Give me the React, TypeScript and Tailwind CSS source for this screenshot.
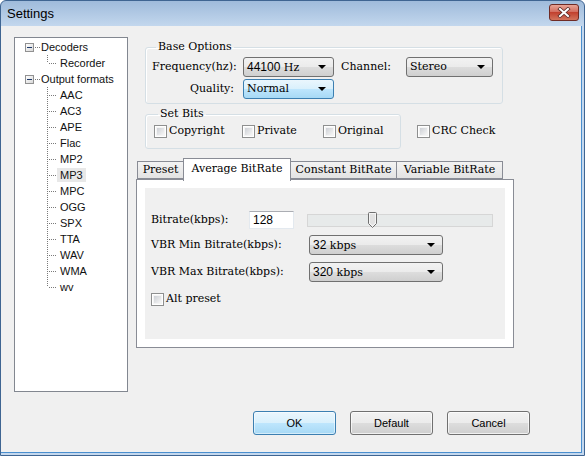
import type { ReactNode } from "react";

// the dialog's labels use a small serif face
const serif = "font-['DejaVu_Serif',serif] text-[11px] text-black";
const sans = "font-['Liberation_Sans',Arial,sans-serif]";

const formats = ["AAC", "AC3", "APE", "Flac", "MP2", "MP3", "MPC", "OGG", "SPX", "TTA", "WAV", "WMA", "wv"];

function Arrow() {
    return (
        <svg width="8" height="4" viewBox="0 0 8 4" className="shrink-0">
            <polygon points="0,0 8,0 4,4" fill="#000" />
        </svg>
    );
}

function Combo({ width, focused, children }: { width: string; focused?: boolean; children: ReactNode }) {
    const skin = focused
        ? "border-[#3c7fb1] bg-[linear-gradient(#eaf6fd_0%,#d9f0fc_50%,#bee6fd_50%,#a7d9f5_100%)]"
        : "border-[#707070] bg-[linear-gradient(#f2f2f2_0%,#ebebeb_50%,#dddddd_50%,#cfcfcf_100%)]";
    return (
        <div className={`${width} h-[20px] flex items-center justify-between rounded-[3px] border pl-[3px] pr-[7px] ${skin}`}>
            <span className={`${serif} leading-[14px]`}>{children}</span>
            <Arrow />
        </div>
    );
}

function CheckBox({ label, width }: { label: string; width?: string }) {
    return (
        <div className={`flex items-center ${width ?? ""}`}>
            <span className="w-[13px] h-[13px] border border-[#8e8f8f] bg-white p-[1px] flex shrink-0">
                <span className="flex-1 bg-[linear-gradient(135deg,#cdd0d5,#f6f6f6)] border border-[#f4f4f4]" />
            </span>
            <span className={`${serif} ml-[2px] leading-[14px]`}>{label}</span>
        </div>
    );
}

function Button({ label, primary }: { label: string; primary?: boolean }) {
    const skin = primary
        ? "border-[#3c7fb1] bg-[linear-gradient(#eaf6fd_0%,#d9f0fc_50%,#bee6fd_50%,#a7d9f5_100%)] shadow-[inset_0_0_0_1px_#ffffff80]"
        : "border-[#707070] bg-[linear-gradient(#f2f2f2_0%,#ebebeb_50%,#dddddd_50%,#cfcfcf_100%)] shadow-[inset_0_0_0_1px_#ffffffb0]";
    return (
        <button className={`w-[83px] h-[24px] rounded-[3px] border ${skin} ${sans} text-[11px] text-black`}>
            {label}
        </button>
    );
}

function TreeRoot({ label }: { label: string }) {
    return (
        <div className="flex h-[16px] items-center pl-[10px]">
            <span className="w-[9px] h-[9px] border border-[#919191] bg-[linear-gradient(135deg,#ffffff,#d8d8d8)] flex items-center justify-center shrink-0">
                <span className="w-[5px] h-[1px] bg-[#1f3a6b]" />
            </span>
            <svg width="6" height="16" className="shrink-0">
                <path d="M1 8.5H6" stroke="#7a7a7a" strokeDasharray="1 1" />
            </svg>
            <span className="pl-[1px] leading-[14px]">{label}</span>
        </div>
    );
}

function TreeLeaf({ label, last, selected }: { label: string; last?: boolean; selected?: boolean }) {
    return (
        <div className="flex h-[16px] items-center pl-[32px]">
            <svg width="10" height="16" className="shrink-0">
                <path d={last ? "M0.5 0V8" : "M0.5 0V16"} stroke="#7a7a7a" strokeDasharray="1 1" />
                <path d="M2 8.5H10" stroke="#7a7a7a" strokeDasharray="1 1" />
            </svg>
            <span className={`px-[3px] leading-[14px] ${selected ? "bg-[#e8e8e8]" : ""}`}>{label}</span>
        </div>
    );
}

function Tab({ label, width, active }: { label: string; width: string; active?: boolean }) {
    if (active) {
        return (
            <div className={`${width} h-[23px] -ml-[1px] relative z-10 bg-white border border-b-0 border-[#898c95] flex justify-center pt-[3px]`}>
                <span className={`${serif} leading-[14px]`}>{label}</span>
            </div>
        );
    }
    return (
        <div className={`${width} h-[18px] mb-[2px] -ml-[1px] first:ml-0 border border-[#898c95] bg-[linear-gradient(#f3f3f3,#e3e3e3)] flex items-center justify-center`}>
            <span className={`${serif} leading-[14px]`}>{label}</span>
        </div>
    );
}

export default function App() {
    return (
        <div className="w-[585px] h-[456px] flex flex-col bg-[linear-gradient(#9fbbdb,#c4d8ee_26px,#c4d8ee)] border border-[#3f6592] rounded-t-[6px] overflow-hidden">
            {/* title bar */}
            <div className="h-[25px] flex items-center justify-between pl-[6px] pr-[5px] shrink-0">
                <span className={`${sans} text-[13px] text-black`}>Settings</span>
                <div className="w-[30px] h-[17px] -mt-[3px] rounded-[3px] border border-[#6f2b25] bg-[linear-gradient(#e8a496,#d0685a_50%,#c2412f_50%,#d2745c)] flex items-center justify-center">
                    <svg width="14" height="11" viewBox="0 0 14 11">
                        <path d="M3 2L11 9M11 2L3 9" stroke="#5b2b27" strokeWidth="3.6" strokeLinecap="square" />
                        <path d="M3 2L11 9M11 2L3 9" stroke="#ffffff" strokeWidth="2" strokeLinecap="square" />
                    </svg>
                </div>
            </div>

            {/* client area */}
            <div className="flex-1 mr-[2px] mb-[2px] bg-[#f0f0f0] border-r border-b border-[#4a8fcf] flex flex-col">
                <div className="flex pt-[11px] pl-[13px]">
                    {/* tree */}
                    <div className={`w-[114px] h-[355px] bg-white border border-[#828790] pt-[1px] ${sans} text-[11px] text-[#111]`}>
                        <TreeRoot label="Decoders" />
                        <TreeLeaf label="Recorder" last />
                        <TreeRoot label="Output formats" />
                        {formats.map((f, i) => (
                            <TreeLeaf key={f} label={f} last={i === formats.length - 1} selected={f === "MP3"} />
                        ))}
                    </div>

                    {/* right column */}
                    <div className="ml-[8px] pt-[4px] w-[378px] flex flex-col">
                        <fieldset className="ml-[9px] w-[358px] border border-[#d5dfe5] rounded-[3px] shadow-[inset_1px_1px_0_#ffffff] pl-[6px] pt-[4px] pb-[4px]">
                            <legend className={`${serif} ml-[4px] px-[2px] leading-[12px]`}>Base Options</legend>
                            <div className="flex items-center">
                                <span className={`${serif} w-[91px]`}>Frequency(hz):</span>
                                <Combo width="w-[91px]"><span className={`${sans} text-[12px]`}>44100</span> Hz</Combo>
                                <span className={`${serif} ml-[7px] w-[65px]`}>Channel:</span>
                                <Combo width="w-[87px]">Stereo</Combo>
                            </div>
                            <div className="flex items-center mt-[2px]">
                                <span className={`${serif} w-[91px] text-right pr-[9px]`}>Quality:</span>
                                <Combo width="w-[91px]" focused>Normal</Combo>
                            </div>
                        </fieldset>

                        <div className="flex items-start mt-[4px]">
                            <fieldset className="ml-[9px] w-[256px] border border-[#d5dfe5] rounded-[3px] shadow-[inset_1px_1px_0_#ffffff] pl-[8px] pt-[4px] pb-[10px] flex">
                                <legend className={`${serif} ml-[4px] px-[2px] leading-[12px]`}>Set Bits</legend>
                                <div className="flex">
                                    <CheckBox label="Copyright" width="w-[88px]" />
                                    <CheckBox label="Private" width="w-[81px]" />
                                    <CheckBox label="Original" />
                                </div>
                            </fieldset>
                            <div className="ml-[16px] mt-[16px]">
                                <CheckBox label="CRC Check" />
                            </div>
                        </div>

                        {/* tabs */}
                        <div className="flex items-end mt-[9px] ml-[1px] -mb-[2px]">
                            <Tab label="Preset" width="w-[47px]" />
                            <Tab label="Average BitRate" width="w-[108px]" active />
                            <Tab label="Constant BitRate" width="w-[107px]" />
                            <Tab label="Variable BitRate" width="w-[107px]" />
                        </div>
                        <div className="w-[378px] h-[169px] bg-white border border-[#898c95] p-[8px]">
                            <div className="h-full bg-[#f0f0f0] pl-[6px] pt-[23px]">
                                <div className="flex items-center h-[18px]">
                                    <span className={`${serif} w-[98px]`}>Bitrate(kbps):</span>
                                    <div className="w-[45px] h-[18px] bg-white border border-[#e3e9ef] border-t-[#abadb3] flex items-center pl-[3px]">
                                        <span className={`${sans} text-[12px] text-black`}>128</span>
                                    </div>
                                    <div className="ml-[13px] w-[186px] h-[13px] bg-[#e7eaea] border border-[#d6d6d6] flex items-center pl-[60px]">
                                        <svg width="9" height="16" viewBox="0 0 9 16" className="shrink-0">
                                            <path d="M0.5 1.5Q0.5 0.5 1.5 0.5H7.5Q8.5 0.5 8.5 1.5V11.5L4.5 15.5L0.5 11.5Z" fill="#f4f4f4" stroke="#6f6f6f" />
                                            <path d="M2 2H7V11L4.5 13.5L2 11Z" fill="#e2e2e2" />
                                        </svg>
                                    </div>
                                </div>
                                <div className="flex items-center mt-[6px]">
                                    <span className={`${serif} w-[158px]`}>VBR Min Bitrate(kbps):</span>
                                    <Combo width="w-[134px]"><span className={`${sans} text-[12px]`}>32</span> kbps</Combo>
                                </div>
                                <div className="flex items-center mt-[7px]">
                                    <span className={`${serif} w-[158px]`}>VBR Max Bitrate(kbps):</span>
                                    <Combo width="w-[134px]"><span className={`${sans} text-[12px]`}>320</span> kbps</Combo>
                                </div>
                                <div className="mt-[10px]">
                                    <CheckBox label="Alt preset" />
                                </div>
                            </div>
                        </div>
                    </div>
                </div>

                {/* buttons */}
                <div className="flex gap-[14px] pl-[252px] mt-[19px]">
                    <Button label="OK" primary />
                    <Button label="Default" />
                    <Button label="Cancel" />
                </div>
            </div>
        </div>
    );
}
